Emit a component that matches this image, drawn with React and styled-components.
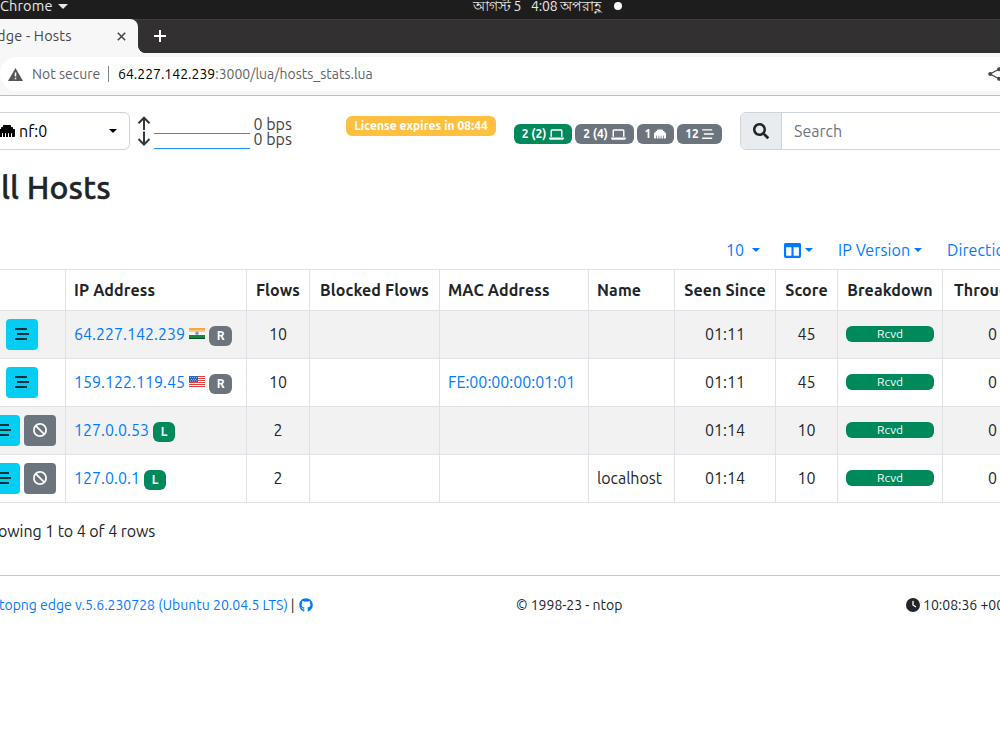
import React from "react";
import styled, { createGlobalStyle } from "styled-components";
import {
  FaBan,
  FaClock,
  FaEthernet,
  FaGithub,
  FaLaptop,
} from "react-icons/fa6";
import { FaColumns, FaSearch } from "react-icons/fa";

const HOSTS = [
  { ip: "64.227.142.239", flag: "in", badge: "R", flows: 10, mac: "", name: "", seen: "01:11", score: 45 },
  { ip: "159.122.119.45", flag: "us", badge: "R", flows: 10, mac: "FE:00:00:00:01:01", name: "", seen: "01:11", score: 45 },
  { ip: "127.0.0.53", badge: "L", flows: 2, mac: "", name: "", seen: "01:14", score: 10, canBlock: true },
  { ip: "127.0.0.1", badge: "L", flows: 2, mac: "", name: "localhost", seen: "01:14", score: 10, canBlock: true },
];

const Flag = ({ country }) =>
  country === "in" ? (
    <FlagSvg viewBox="0 0 16 11">
      <rect width="16" height="11" fill="#f6f6f6" />
      <rect width="16" height="2" fill="#f9a63a" />
      <rect y="2" width="16" height="2" fill="#fbc987" />
      <rect y="7" width="16" height="4" fill="#138a35" />
      <rect y="10" width="16" height="1" fill="#0b4f25" />
      <circle cx="8" cy="5.3" r="1.7" fill="#8b93b5" />
    </FlagSvg>
  ) : (
    <FlagSvg viewBox="0 0 16 11">
      <rect width="16" height="11" fill="#fff" />
      {[0, 2, 4, 6, 8, 10].map((y) => (
        <rect key={y} y={y} width="16" height="1" fill="#e2423f" />
      ))}
      <rect width="9" height="6" fill="#2f62bd" />
      <path d="M1 1.5h7M2 3.5h6M1 5h7" stroke="#b9cbec" strokeWidth=".8" strokeDasharray="1 1" />
    </FlagSvg>
  );

const StreamIcon = ({ width = 14, height = 12 }) => (
  <svg width={width} height={height} viewBox="0 0 14 12">
    <path d="M0 1h12M2 6h12M0 11h12" stroke="currentColor" strokeWidth="1.7" />
  </svg>
);

const App = () => {
  return (
    <Screen>
      <GlobalStyle />
      <DesktopBar>
        <AppMenu>
          Chrome <Caret $size={5} />
        </AppMenu>
        <DesktopClock>
          <span>আগস্ট 5</span>
          <span>4:08 অপরাহ্ণ</span>
          <Dot />
        </DesktopClock>
      </DesktopBar>

      <TabStrip>
        <Tab>
          <span>dge - Hosts</span>
          <svg width="9" height="9" viewBox="0 0 9 9">
            <path d="M.8.8l7.4 7.4M8.2.8L.8 8.2" stroke="#45484b" strokeWidth="1.6" />
          </svg>
        </Tab>
        <NewTab>
          <svg width="12" height="12" viewBox="0 0 12 12">
            <path d="M6 0v12M0 6h12" stroke="#fff" strokeWidth="2" />
          </svg>
        </NewTab>
      </TabStrip>

      <AddressRow>
        <AddressBar>
          <svg width="15" height="13" viewBox="0 0 15 13">
            <path d="M7.5 0L15 13H0z" fill="#54585c" />
            <path d="M7.5 4.5v4M7.5 9.7v1.6" stroke="#fff" strokeWidth="1.5" />
          </svg>
          <NotSecure>Not secure</NotSecure>
          <Url>
            <b>64.227.142.239</b>:3000/lua/hosts_stats.lua
          </Url>
          <ShareIcon width="14" height="14" viewBox="0 0 14 14">
            <path d="M11 2.2L2 7l9 4.8" fill="none" stroke="#45484b" strokeWidth="1.3" />
            <circle cx="2.2" cy="7" r="2" fill="#45484b" />
            <circle cx="11" cy="2.2" r="2" fill="#45484b" />
            <circle cx="11" cy="11.8" r="2" fill="#45484b" />
          </ShareIcon>
        </AddressBar>
      </AddressRow>

      <Navbar>
        <InterfaceSelect>
          <FaEthernet size={16} />
          <span>nf:0</span>
          <Caret />
        </InterfaceSelect>
        <Throughput>
          <svg width="14" height="32" viewBox="0 0 14 32">
            <path
              d="M7 15V3M1.5 8.2L7 2.7l5.5 5.5M7 16.5V29.5M1.5 24L7 29.5l5.5-5.5"
              fill="none"
              stroke="#33383d"
              strokeWidth="2"
            />
          </svg>
          <Charts>
            <Sparkline />
            <Sparkline />
          </Charts>
          <Rates>
            <span>0 bps</span>
            <span>0 bps</span>
          </Rates>
        </Throughput>
        <LicenseBadge>License expires in 08:44</LicenseBadge>
        <Badges>
          <Badge $width={58} $color="#00895a">
            2 (2) <FaLaptop size={15} />
          </Badge>
          <Badge $width={59}>
            2 (4) <FaLaptop size={15} />
          </Badge>
          <Badge $width={37}>
            1 <FaEthernet size={12} />
          </Badge>
          <Badge $width={45}>
            12 <StreamIcon width={12} height={10} />
          </Badge>
        </Badges>
        <SearchGroup>
          <SearchAddon>
            <FaSearch size={16} />
          </SearchAddon>
          <SearchInput placeholder="Search" />
        </SearchGroup>
      </Navbar>

      <Title>ll Hosts</Title>

      <TableTools>
        <Tool $width={58} $gap={8}>
          10 <Caret />
        </Tool>
        <Tool $width={54} $gap={4}>
          <FaColumns size={17} /> <Caret />
        </Tool>
        <Tool $width={109} $gap={4}>
          IP Version <Caret />
        </Tool>
        <Tool $width={90}>Direction</Tool>
      </TableTools>

      <HostTable>
        <colgroup>
          {[88, 181, 63, 130, 149, 86, 101, 62, 105, 140].map((width, i) => (
            <col key={i} width={width} />
          ))}
        </colgroup>
        <thead>
          <tr>
            <Th />
            <Th>IP Address</Th>
            <Th $center>Flows</Th>
            <Th $center>Blocked Flows</Th>
            <Th>MAC Address</Th>
            <Th>Name</Th>
            <Th $center>Seen Since</Th>
            <Th $center>Score</Th>
            <Th $center>Breakdown</Th>
            <Th $indent={11}>Throughput</Th>
          </tr>
        </thead>
        <tbody>
          {HOSTS.map((host) => (
            <Row key={host.ip}>
              <Td>
                <Actions>
                  <ActionButton>
                    <StreamIcon />
                  </ActionButton>
                  {host.canBlock && (
                    <ActionButton $dark>
                      <FaBan size={14} />
                    </ActionButton>
                  )}
                </Actions>
              </Td>
              <Td>
                <Address>
                  <Link>{host.ip}</Link>
                  {host.flag && <Flag country={host.flag} />}
                  <HostBadge $local={host.badge === "L"}>{host.badge}</HostBadge>
                </Address>
              </Td>
              <Td $center>{host.flows}</Td>
              <Td />
              <Td>
                <Link>{host.mac}</Link>
              </Td>
              <Td>{host.name}</Td>
              <Td $center>{host.seen}</Td>
              <Td $center>{host.score}</Td>
              <Td>
                <Progress>Rcvd</Progress>
              </Td>
              <Td $indent={45}>0 bps</Td>
            </Row>
          ))}
        </tbody>
      </HostTable>

      <Pagination>owing 1 to 4 of 4 rows</Pagination>

      <Footer>
        <Version>
          <Link>topng edge v.5.6.230728 (Ubuntu 20.04.5 LTS)</Link>
          <span>|</span>
          <FaGithub size={14} color="#007bff" />
        </Version>
        <Copyright>© 1998-23 - ntop</Copyright>
        <ServerTime>
          <FaClock size={14} />
          <span>10:08:36 +0000</span>
        </ServerTime>
      </Footer>
    </Screen>
  );
};

const GlobalStyle = createGlobalStyle`
  * {
    box-sizing: border-box;
  }

  body {
    margin: 0;
    overflow: hidden;
    background: #fff;
    color: #212529;
    font-family: Ubuntu, "Noto Sans", "Open Sans", sans-serif;
    font-size: 16px;
    line-height: 24px;
  }
`;

const Screen = styled.div`
  width: 1000px;
  height: 750px;
  overflow: hidden;
  white-space: nowrap;
`;

const Caret = styled.i`
  border: ${({ $size }) => $size || 4}px solid transparent;
  border-top-color: currentColor;
  border-bottom: 0;
`;

const DesktopBar = styled.header`
  display: flex;
  height: 19px;
  overflow: hidden;
  background: #1d1d1d;
  color: #e8e8e8;
  font-size: 14.5px;
  line-height: 12px;
`;

const AppMenu = styled.div`
  display: flex;
  align-items: center;
  gap: 5px;
  width: 473px;
  height: 12px;
  letter-spacing: 0.15px;
`;

const DesktopClock = styled.div`
  display: flex;
  align-items: center;
  gap: 10px;
  height: 12px;
  font-size: 14px;
  letter-spacing: -0.2px;
`;

const Dot = styled.i`
  width: 8px;
  height: 8px;
  margin-left: 3px;
  border-radius: 50%;
  background: #fff;
`;

const TabStrip = styled.div`
  display: flex;
  height: 34px;
  border-top: 1px solid #3f3d3e;
  background: #333031;
`;

const Tab = styled.div`
  display: flex;
  align-items: center;
  justify-content: space-between;
  width: 138px;
  margin-top: -1px;
  padding-right: 12px;
  border-radius: 0 8px 0 0;
  background: #f7f7f7;
  color: #45484b;
  font-size: 14.5px;

  span {
    margin-left: -3px;
    letter-spacing: 0.2px;
  }
`;

const NewTab = styled.div`
  display: flex;
  flex: 1;
  align-items: center;
  padding: 0 0 2px 16px;
  border-radius: 0 0 0 8px;
  background: radial-gradient(circle at 8px calc(100% - 8px), #333031 8px, #333031 0);
  box-shadow: -4px 4px 0 #f7f7f7;
  clip-path: inset(0);
`;

const AddressRow = styled.div`
  height: 43px;
  padding-top: 4px;
  border-bottom: 1px solid #bdbdbd;
  background: #f7f7f7;
`;

const AddressBar = styled.div`
  display: flex;
  align-items: center;
  height: 34px;
  padding-left: 8px;
  border-radius: 17px 0 0 17px;
  background: #fff;
  color: #5f6368;
  font-size: 14px;
`;

const NotSecure = styled.span`
  width: 77px;
  margin-left: 9px;
  border-right: 1px solid #85888b;
  line-height: 16px;
`;

const Url = styled.span`
  flex: 1;
  margin-left: 9px;

  b {
    color: #000;
    font-weight: 400;
  }
`;

const ShareIcon = styled.svg`
  flex: none;
  margin-right: -2px;
`;

const Navbar = styled.nav`
  display: flex;
  height: 54px;
  padding-top: 16px;
`;

const InterfaceSelect = styled.div`
  display: flex;
  flex: none;
  align-items: center;
  width: 131px;
  height: 38px;
  margin-left: -1px;
  padding-right: 12px;
  border: 1px solid #ced4da;
  border-radius: 0 6px 6px 0;
  color: #000;

  svg {
    margin-left: -1px;
  }

  span {
    flex: 1;
    margin-left: 4px;
  }
`;

const Throughput = styled.div`
  display: flex;
  flex: none;
  width: 216px;
  padding: 3px 0 0 7px;
  color: #444;
`;

const Charts = styled.div`
  width: 96px;
  margin: 0 3.5px 0 3px;
  padding-top: 4px;
`;

const Sparkline = styled.div`
  height: 15px;
  border-bottom: 1px solid #1e90ff;
`;

const Rates = styled.div`
  display: flex;
  flex-direction: column;
  padding-top: 2px;
  line-height: 15px;
`;

const Badge = styled.span`
  display: flex;
  flex: none;
  align-items: center;
  justify-content: center;
  gap: 3px;
  width: ${({ $width }) => $width}px;
  height: 20px;
  border-radius: 6px;
  background: ${({ $color }) => $color || "#6c757d"};
  color: #fff;
  font-size: 12px;
  font-weight: 700;
  line-height: 20px;
`;

const LicenseBadge = styled(Badge).attrs({ $width: 150, $color: "#ffc03f" })`
  margin-top: 4px;
  letter-spacing: 0.05px;
`;

const Badges = styled.div`
  display: flex;
  flex: none;
  gap: 3px;
  width: 226px;
  margin-left: 18px;
  padding-top: 12px;
`;

const SearchGroup = styled.div`
  display: flex;
  flex: none;
  width: 280px;
  height: 38px;
  border: 1px solid #ced4da;
  border-radius: 6px;
  overflow: hidden;
`;

const SearchAddon = styled.div`
  display: flex;
  flex: none;
  align-items: center;
  justify-content: center;
  width: 41px;
  border-right: 1px solid #ced4da;
  background: #e9ecef;
`;

const SearchInput = styled.input`
  flex: 1;
  padding: 0 12px;
  border: 0;
  font: inherit;

  &::placeholder {
    color: #6c757d;
  }
`;

const Title = styled.h2`
  height: 76px;
  margin: 0;
  padding: 17px 0 0 1px;
  font-size: 32px;
  font-weight: 500;
  letter-spacing: 0.1px;
  line-height: 40px;
  -webkit-text-stroke: 0.4px;
`;

const TableTools = styled.div`
  display: flex;
  height: 43px;
  padding: 12px 0 0 726px;
`;

const Tool = styled.div`
  display: flex;
  flex: none;
  align-items: center;
  gap: ${({ $gap }) => $gap || 0}px;
  width: ${({ $width }) => $width}px;
  height: 24px;
  color: #007bff;
  letter-spacing: 0.1px;
`;

const HostTable = styled.table`
  width: 1105px;
  margin-left: -22px;
  border-top: 1px solid #dee2e6;
  border-spacing: 0;
  table-layout: fixed;
`;

const Td = styled.td`
  height: 48px;
  padding: 0 8px 1px ${({ $indent }) => $indent || 8}px;
  border-right: 1px solid #dee2e6;
  border-bottom: 1px solid #dee2e6;
  text-align: ${({ $center }) => ($center ? "center" : "left")};
`;

const Th = styled(Td).attrs({ as: "th" })`
  height: 41px;
  padding-bottom: 0;
  font-weight: 700;
  letter-spacing: 0.13px;
`;

const Row = styled.tr`
  &:nth-child(odd) {
    background: #f2f2f2;
  }
`;

const Actions = styled.div`
  display: flex;
  justify-content: center;
  gap: 4px;
`;

const ActionButton = styled.div`
  display: flex;
  flex: none;
  align-items: center;
  justify-content: center;
  width: 32px;
  height: 31px;
  padding-bottom: 1px;
  border-radius: 4px;
  background: ${({ $dark }) => ($dark ? "#6c757d" : "#03cdf2")};
  color: ${({ $dark }) => ($dark ? "#fff" : "#000")};
`;

const Address = styled.div`
  display: flex;
  align-items: center;
  gap: 4px;
`;

const Link = styled.span`
  color: #007bff;
`;

const FlagSvg = styled.svg`
  width: 16px;
  height: 11px;
  margin-bottom: 2px;
`;

const HostBadge = styled(Badge).attrs(({ $local }) => ({
  $width: $local ? 22 : 23,
  $color: $local ? "#00895a" : "#6c757d",
}))`
  margin-top: 3px;
`;

const Progress = styled.div`
  height: 16px;
  border-radius: 6px;
  background: #00895a;
  color: #fff;
  font-size: 12px;
  line-height: 16px;
  text-align: center;
`;

const Pagination = styled.div`
  height: 72px;
  margin-left: -2px;
  padding-top: 16px;
  letter-spacing: -0.08px;
`;

const Footer = styled.footer`
  display: flex;
  padding-top: 17px;
  border-top: 1px solid #c4c6c8;
  font-size: 14px;
`;

const Version = styled.div`
  display: flex;
  flex: none;
  align-items: center;
  gap: 3px;
  width: 517px;
  margin-left: -1px;

  svg {
    margin-left: 1px;
  }
`;

const Copyright = styled.div`
  flex: none;
  width: 390px;
`;

const ServerTime = styled.div`
  display: flex;
  align-items: center;
  gap: 3px;
`;

export default App;
